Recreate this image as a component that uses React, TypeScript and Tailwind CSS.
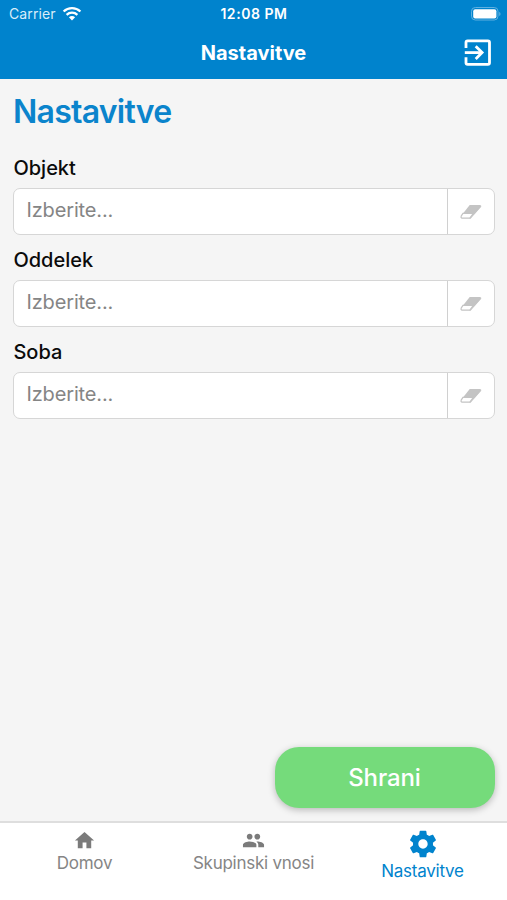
import React from "react";
import { MdHome, MdPeople } from "react-icons/md";

function WifiIcon() {
  return (
    <svg width="20" height="15" viewBox="0 0 20 15" fill="none" stroke="white" strokeWidth="2.3">
      <path d="M1.6 5.5C6.4 .9 13.6 .9 18.4 5.5" />
      <path d="M4.6 8.8C7.7 5.9 12.3 5.9 15.4 8.8" />
      <path d="M10 14.4L6.9 11.2C8.7 9.6 11.3 9.6 13.1 11.2Z" fill="white" stroke="none" />
    </svg>
  );
}

function BatteryIcon() {
  return (
    <svg width="30" height="14" viewBox="0 0 30 14">
      <rect x=".5" y=".5" width="26.5" height="12.5" rx="3.8" fill="none" stroke="#5fb0e0" />
      <rect x="2.2" y="2.2" width="23.2" height="9.2" rx="2" fill="white" />
      <path d="M28.2 4.7C30 5.5 30 8.2 28.2 9Z" fill="#5fb0e0" />
    </svg>
  );
}

function ExitIcon() {
  return (
    <svg width="28" height="28" viewBox="0 0 28 28" fill="none" stroke="white" strokeWidth="2.8">
      <path d="M2 9V3.5Q2 1.9 3.6 1.9H23.9Q25.5 1.9 25.5 3.5V23.7Q25.5 25.3 23.9 25.3H3.6Q2 25.3 2 23.7V18.2" />
      <path d="M.8 13.6H17.6" />
      <path d="M11.7 7.2L18.1 13.6L11.7 20" />
    </svg>
  );
}

function GearIcon() {
  return (
    <svg width="32" height="32" viewBox="0 0 24 24" fill="currentColor">
      <path d="M19.43 12.98c.04-.32.07-.64.07-.98s-.03-.66-.07-.98l2.11-1.65c.19-.15.24-.42.12-.64l-2-3.46c-.12-.22-.39-.3-.61-.22l-2.49 1c-.52-.4-1.08-.73-1.69-.98l-.38-2.65C14.46 2.18 14.25 2 14 2h-4c-.25 0-.46.18-.49.42l-.38 2.65c-.61.25-1.17.59-1.69.98l-2.49-1c-.23-.09-.49 0-.61.22l-2 3.46c-.13.22-.07.49.12.64l2.11 1.65c-.04.32-.07.65-.07.98s.03.66.07.98l-2.11 1.65c-.19.15-.24.42-.12.64l2 3.46c.12.22.39.3.61.22l2.49-1c.52.4 1.08.73 1.69.98l.38 2.65c.03.24.24.42.49.42h4c.25 0 .46-.18.49-.42l.38-2.65c.61-.25 1.17-.59 1.69-.98l2.49 1c.23.09.49 0 .61-.22l2-3.46c.12-.22.07-.49-.12-.64l-2.11-1.65zM12 15.5c-1.93 0-3.5-1.57-3.5-3.5s1.57-3.5 3.5-3.5 3.5 1.57 3.5 3.5-1.57 3.5-3.5 3.5z" />
    </svg>
  );
}

function EraserIcon() {
  return (
    <svg width="22" height="16" viewBox="0 0 22 16">
      <path d="M9.7 1H20Q21.6 1 20.8 2.8L14.4 9.9H2.6Z" fill="#c4c4c4" />
      <path d="M3 9.4H13.4L9.8 14.1H2.1Q.5 14.1 1.3 11.9Z" fill="white" stroke="#c4c4c4" strokeWidth="1.2" />
      <path d="M21.2 1.6V2.8L10.6 14.7H9.4L13.6 9.3Z" fill="#c4c4c4" />
    </svg>
  );
}

function Field({ label }: { label: string }) {
  return (
    <div className="h-[92px]">
      <div className="flex h-[32px] items-center pb-[9px] pl-[0.4px] text-[20px] leading-[24px] font-medium whitespace-nowrap text-[#0b0b0b]">
        {label}
      </div>
      <div className="flex h-[47px] rounded-[7px] border-[1.5px] border-[#d6d6d6] bg-white">
        <div className="flex-1 pt-[8px] pl-[12.5px] text-[20px] leading-[26px] tracking-[-0.15px] text-[#858585]">
          Izberite...
        </div>
        <div className="flex w-[47px] items-center justify-center border-l border-[#d0d0d0] pl-[1px]">
          <EraserIcon />
        </div>
      </div>
    </div>
  );
}

export default function App() {
  return (
    <div className="flex h-[900px] w-[507px] flex-col overflow-hidden bg-[#f5f5f5] font-['Inter','Liberation_Sans',sans-serif]">
      <header className="h-[79px] shrink-0 bg-[#0083cd] text-white">
        <div className="grid h-[27px] grid-cols-3 items-center pr-[8px] pl-[9px]">
          <div className="flex items-center gap-[6px] text-[14px] tracking-[0.1px] text-[#d9edf9]">
            <span>Carrier</span>
            <WifiIcon />
          </div>
          <div className="text-center text-[14px] font-semibold tracking-[0.55px]">12:08 PM</div>
          <div className="-mr-[2px] flex justify-end">
            <BatteryIcon />
          </div>
        </div>
        <div className="grid h-[51px] grid-cols-[1fr_auto_1fr] items-center px-[15px]">
          <div />
          <h1 className="text-[20px] font-bold">Nastavitve</h1>
          <div className="flex justify-end">
            <ExitIcon />
          </div>
        </div>
      </header>
      <main className="flex flex-1 flex-col pr-[12.5px] pl-[13px]">
        <h2 className="h-[76px] pt-[13px] text-[32px] leading-[40px] font-semibold tracking-[-0.75px] text-[#0b84cc]">
          Nastavitve
        </h2>
        <div className="mt-[1px]">
          <Field label="Objekt" />
          <Field label="Oddelek" />
          <Field label="Soba" />
        </div>
        <button className="mt-auto mb-[13px] h-[61px] w-[220px] self-end rounded-[24px] bg-[#75db7b] text-[24px] font-medium tracking-[-0.1px] text-white shadow-[0_2px_7px_rgba(0,0,0,0.25)]">
          Shrani
        </button>
      </main>
      <nav className="grid h-[79px] shrink-0 grid-cols-3 border-t-2 border-[#dedede] bg-white text-[17px] leading-[22px] tracking-[-0.25px] text-[#858585]">
        <div className="flex flex-col items-center pt-[6px]">
          <MdHome size={23} color="#7b7b7b" />
          <span>Domov</span>
        </div>
        <div className="flex flex-col items-center pt-[6px]">
          <MdPeople size={23} color="#7b7b7b" />
          <span>Skupinski vnosi</span>
        </div>
        <div className="flex flex-col items-center pt-[4.5px] text-[#0083cd]">
          <GearIcon />
          <span>Nastavitve</span>
        </div>
      </nav>
    </div>
  );
}
